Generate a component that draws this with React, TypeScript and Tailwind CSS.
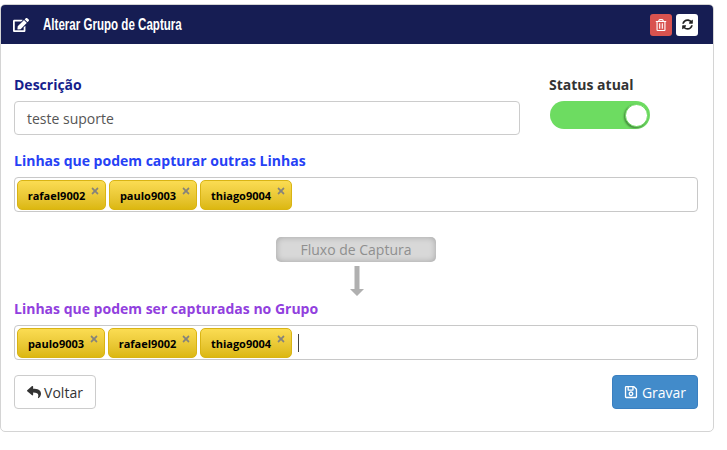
import { FaEdit, FaRegTrashAlt, FaSyncAlt, FaReply, FaRegSave, FaTimes } from "react-icons/fa";

const openSans = "font-['Open_Sans',sans-serif]";

const Tag = ({ label, width }: { label: string; width: string }) => (
  <span
    className={`relative flex h-[30px] ${width} items-center justify-center rounded-[5px] border border-[#d9b414] bg-gradient-to-b from-[#fbdc52] to-[#dcb80f] pr-[10px] pt-[3px] text-[11px] font-bold text-black`}
  >
    {label}
    <FaTimes className="absolute right-[5px] top-[5px] text-[10px] text-[#86837a]" />
  </span>
);

const TagBox = ({ children }: { children: React.ReactNode }) => (
  <div className="flex h-[35px] items-center gap-[3px] rounded-[4px] border border-[#c8c8c8] bg-white pl-[2px]">
    {children}
  </div>
);

export default function App() {
  return (
    <div className={`h-[450px] w-[727px] overflow-hidden bg-white pt-1 ${openSans}`}>
      <div className="h-[428px] w-[714px] rounded-[5px] border border-[#d4d4d4]">
        {/* Header */}
        <div className="flex h-[39px] items-center justify-between rounded-t-[4px] bg-[#161d53] pl-[12px] pr-[15px]">
          <div className="flex items-center gap-[14px] text-white">
            <FaEdit className="text-[16px]" />
            <h2 className="origin-left scale-x-[0.68] font-['Liberation_Sans_Narrow','Liberation_Sans',sans-serif] text-[17px] leading-none font-bold whitespace-nowrap">
              Alterar Grupo de Captura
            </h2>
          </div>
          <div className="flex gap-[4px]">
            <button className="flex size-[22px] items-center justify-center rounded-[3px] bg-[#d9534f] text-[12px] text-white">
              <FaRegTrashAlt />
            </button>
            <button className="flex size-[22px] items-center justify-center rounded-[3px] bg-white text-[11px] text-[#222]">
              <FaSyncAlt />
            </button>
          </div>
        </div>

        <div className="px-[13px] pt-[32px]">
          {/* Descricao + status */}
          <div className="flex">
            <div className="w-[506px]">
              <label className="block text-[14px] leading-[18px] font-bold text-[#151e8c]">Descrição</label>
              <div className="mt-[7px] flex h-[34px] items-center rounded-[4px] border border-[#ccc] bg-white pl-3 text-[14px] text-[#555]">
                teste suporte
              </div>
            </div>
            <div className="ml-[29px]">
              <label className="block text-[14px] leading-[18px] font-bold text-[#333]">Status atual</label>
              <div className="mt-[7px] ml-px flex h-[28px] w-[100px] items-center justify-end rounded-full bg-[#6ddc61] pr-[2px]">
                <span className="size-[23px] rounded-full border border-[#6ddc61] bg-white shadow-[-1px_1px_2px_rgba(0,0,0,0.4)]" />
              </div>
            </div>
          </div>

          {/* Linhas que capturam */}
          <label className="mt-[17px] block text-[14px] leading-[18px] font-bold text-[#2641f5]">
            Linhas que podem capturar outras Linhas
          </label>
          <div className="mt-[7px] w-[684px]">
            <TagBox>
              <Tag label="rafael9002" width="w-[89px]" />
              <Tag label="paulo9003" width="w-[88px]" />
              <Tag label="thiago9004" width="w-[92px]" />
            </TagBox>
          </div>

          {/* Fluxo */}
          <div className="ml-[262px] mt-[25px] flex w-[160px] flex-col items-center">
            <div className="flex h-[25px] w-full items-center justify-center rounded-[5px] bg-[#d8d8d8] text-[14px] text-[#8f8f8f] shadow-[inset_0_0_6px_rgba(0,0,0,0.25)]">
              Fluxo de Captura
            </div>
            <svg className="ml-[2px] mt-[4px] h-[30px] w-[14px]" viewBox="0 0 14 30" fill="#b0b0b0">
              <path d="M4.5 0h5v23h4.500l-7 7-7-7h4.500z" />
            </svg>
          </div>

          {/* Linhas capturadas */}
          <label className="mt-[4px] block text-[14px] leading-[18px] font-bold text-[#9140de]">
            Linhas que podem ser capturadas no Grupo
          </label>
          <div className="mt-[7px] w-[684px]">
            <TagBox>
              <Tag label="paulo9003" width="w-[88px]" />
              <Tag label="rafael9002" width="w-[89px]" />
              <Tag label="thiago9004" width="w-[92px]" />
              <span className="ml-[3px] h-[18px] w-px bg-[#444]" />
            </TagBox>
          </div>

          {/* Buttons */}
          <div className="mt-[15px] flex w-[684px] justify-between">
            <button className="flex h-[34px] w-[82px] items-center justify-center gap-[3px] rounded-[4px] border border-[#ccc] bg-white text-[14px] text-[#333]">
              <FaReply className="text-[14px]" />
              Voltar
            </button>
            <button className="flex h-[34px] w-[86px] items-center justify-center gap-[4px] rounded-[4px] border border-[#3a7fc0] bg-[#428bca] text-[14px] text-white">
              <FaRegSave className="text-[14px]" />
              Gravar
            </button>
          </div>
        </div>
      </div>
    </div>
  );
}
